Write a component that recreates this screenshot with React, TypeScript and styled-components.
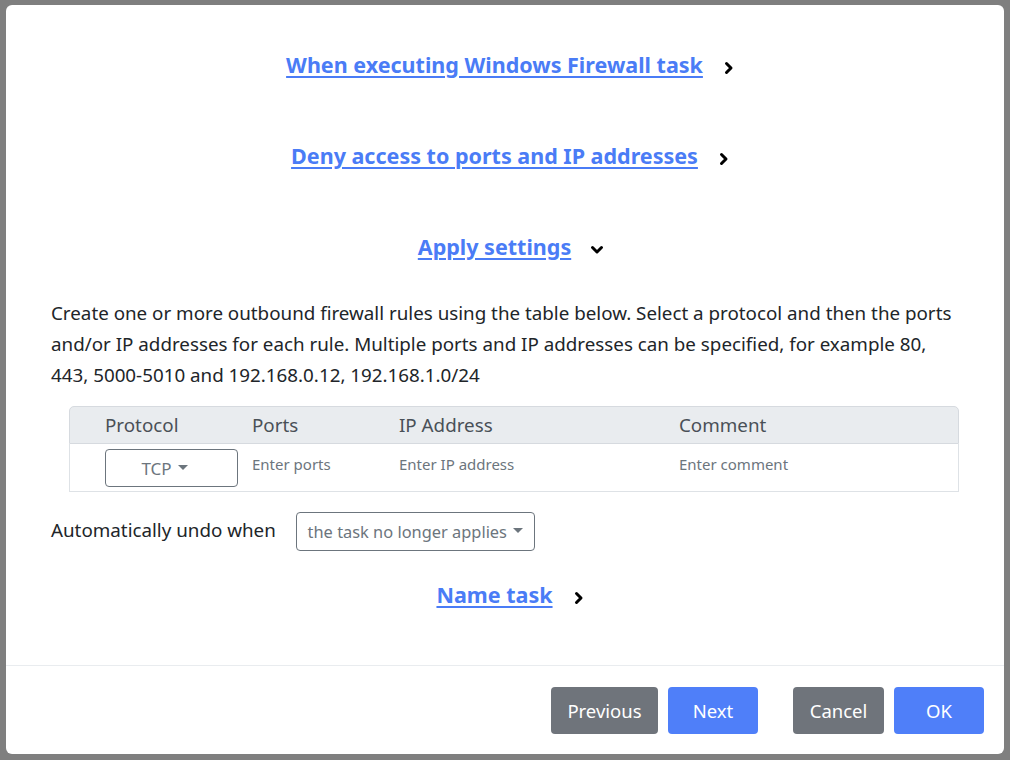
import React from 'react';
import styled, { createGlobalStyle } from 'styled-components';

const GlobalStyle = createGlobalStyle`
  html, body {
    margin: 0;
    padding: 0;
    background: #7f7f7f;
  }
  body {
    padding: 5px 6px;
    font-family: "Noto Sans", "Segoe UI", Arial, sans-serif;
    color: #212529;
  }
  * { box-sizing: border-box; }
`;

const Dialog = styled.div`
  width: 998px;
  height: 749px;
  background: #fff;
  border-radius: 6px;
  display: flex;
  flex-direction: column;
  overflow: hidden;
`;

const Body = styled.div`
  flex: 1;
  min-height: 0;
  padding: 38px 45px 0;
`;

const SectionHead = styled.div`
  display: flex;
  justify-content: center;
  align-items: center;
  gap: 19px;
  height: 42px;
  margin-bottom: 49px;
  padding-left: 12px;
`;

const HeadLink = styled.a`
  color: #4a7cf6;
  font-weight: 700;
  font-size: 21.5px;
  text-decoration: underline;
  text-underline-offset: 3px;
  text-decoration-thickness: 2px;
  cursor: pointer;
`;

const Intro = styled.p`
  margin: -18px 0 15px;
  font-size: 18.8px;
  line-height: 31px;
`;

const Table = styled.div`
  margin-left: 18px;
  font-size: 18.8px;
`;

const HeaderRow = styled.div`
  display: grid;
  grid-template-columns: 147px 147px 280px 1fr;
  align-items: center;
  height: 38px;
  padding-left: 35px;
  background: #e9ecef;
  border: 1px solid #d6dadf;
  border-radius: 5px 5px 0 0;
  color: #495057;
`;

const DataRow = styled.div`
  display: grid;
  grid-template-columns: 147px 147px 280px 1fr;
  align-items: start;
  height: 48px;
  padding: 5px 0 0 35px;
  border: 1px solid #dee2e6;
  border-top: none;
`;

const Placeholder = styled.span`
  font-size: 15px;
  color: #6c757d;
  padding-top: 5px;
`;

const SelectBox = styled.div<{ $width: number; $height: number; $size: number; $shift?: number }>`
  display: inline-flex;
  align-items: center;
  justify-content: center;
  gap: 6px;
  width: ${p => p.$width}px;
  height: ${p => p.$height}px;
  padding-right: ${p => p.$shift ?? 0}px;
  border: 1px solid #6c757d;
  border-radius: 4px;
  color: #6c757d;
  font-size: ${p => p.$size}px;
  background: #fff;
`;

const Caret = styled.span`
  width: 0;
  height: 0;
  border-left: 5px solid transparent;
  border-right: 5px solid transparent;
  border-top: 5px solid currentColor;
  margin-top: -2px;
`;

const UndoRow = styled.div`
  display: flex;
  align-items: center;
  gap: 20px;
  margin-top: 20px;
  font-size: 18.8px;
  padding-bottom: 4px;
`;

const UndoLabel = styled.span`
  line-height: 1;
  margin-top: -3px;
`;

const NameHead = styled(SectionHead)`
  margin-top: 18px;
`;

const Footer = styled.div`
  flex: none;
  display: flex;
  justify-content: flex-end;
  align-items: center;
  height: 89px;
  padding: 0 20px 0 0;
  border-top: 1px solid #e9ecef;
`;

const Button = styled.button<{ $variant: 'primary' | 'secondary'; $width: number; $gapBefore?: number }>`
  width: ${p => p.$width}px;
  height: 47px;
  margin-left: ${p => p.$gapBefore ?? 10}px;
  border: none;
  border-radius: 4px;
  font-family: inherit;
  font-size: 18.5px;
  color: #fff;
  background: ${p => (p.$variant === 'primary' ? '#4f7ff9' : '#6f747b')};
  cursor: pointer;
`;

const Chevron = ({ down }: { down?: boolean }) => (
  <svg width="14" height="14" viewBox="0 0 14 14" style={{ marginTop: 7 }}>
    {down ? (
      <path d="M2.5 4.5 L7 9 L11.5 4.5" fill="none" stroke="#000" strokeWidth="3" strokeLinecap="round" strokeLinejoin="round" />
    ) : (
      <path d="M4.5 2.5 L9 7 L4.5 11.5" fill="none" stroke="#000" strokeWidth="3" strokeLinecap="round" strokeLinejoin="round" />
    )}
  </svg>
);

export default function App() {
  return (
    <>
      <GlobalStyle />
      <Dialog>
        <Body>
          <SectionHead>
            <HeadLink>When executing Windows Firewall task</HeadLink>
            <Chevron />
          </SectionHead>
          <SectionHead>
            <HeadLink>Deny access to ports and IP addresses</HeadLink>
            <Chevron />
          </SectionHead>
          <SectionHead>
            <HeadLink>Apply settings</HeadLink>
            <Chevron down />
          </SectionHead>
          <Intro>
            Create one or more outbound firewall rules using the table below. Select a protocol and then the ports
            and/or IP addresses for each rule. Multiple ports and IP addresses can be specified, for example 80,
            443, 5000-5010 and 192.168.0.12, 192.168.1.0/24
          </Intro>
          <Table>
            <HeaderRow>
              <span>Protocol</span>
              <span>Ports</span>
              <span>IP Address</span>
              <span>Comment</span>
            </HeaderRow>
            <DataRow>
              <SelectBox $width={133} $height={38} $size={17} $shift={14}>
                TCP <Caret />
              </SelectBox>
              <Placeholder>Enter ports</Placeholder>
              <Placeholder>Enter IP address</Placeholder>
              <Placeholder>Enter comment</Placeholder>
            </DataRow>
          </Table>
          <UndoRow>
            <UndoLabel>Automatically undo when</UndoLabel>
            <SelectBox $width={239} $height={39} $size={16.4}>
              the task no longer applies <Caret />
            </SelectBox>
          </UndoRow>
          <NameHead>
            <HeadLink>Name task</HeadLink>
            <Chevron />
          </NameHead>
        </Body>
        <Footer>
          <Button $variant="secondary" $width={107}>Previous</Button>
          <Button $variant="primary" $width={90}>Next</Button>
          <Button $variant="secondary" $width={91} $gapBefore={35}>Cancel</Button>
          <Button $variant="primary" $width={90}>OK</Button>
        </Footer>
      </Dialog>
    </>
  );
}
